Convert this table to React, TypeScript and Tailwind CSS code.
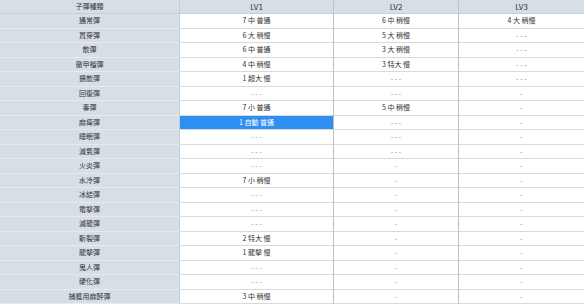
import React from "react";

type Row = { name: string; lv1: string; lv2: string; lv3: string; hot?: boolean };

const rows: Row[] = [
  { name: "通常彈", lv1: "7 中 普通", lv2: "6 中 稍慢", lv3: "4 大 稍慢" },
  { name: "貫穿彈", lv1: "6 大 稍慢", lv2: "5 大 稍慢", lv3: "- - -" },
  { name: "散彈", lv1: "6 中 普通", lv2: "3 大 稍慢", lv3: "- - -" },
  { name: "徹甲榴彈", lv1: "4 中 稍慢", lv2: "3 特大 慢", lv3: "- - -" },
  { name: "擴散彈", lv1: "1 超大 慢", lv2: "- - -", lv3: "- - -" },
  { name: "回復彈", lv1: "- - -", lv2: "- - -", lv3: "-" },
  { name: "毒彈", lv1: "7 小 普通", lv2: "5 中 稍慢", lv3: "-" },
  { name: "麻痺彈", lv1: "1 自動 普通", lv2: "- - -", lv3: "-", hot: true },
  { name: "睡眠彈", lv1: "- - -", lv2: "- - -", lv3: "-" },
  { name: "減氣彈", lv1: "- - -", lv2: "- - -", lv3: "-" },
  { name: "火炎彈", lv1: "- - -", lv2: "-", lv3: "-" },
  { name: "水冷彈", lv1: "7 小 稍慢", lv2: "-", lv3: "-" },
  { name: "冰結彈", lv1: "- - -", lv2: "-", lv3: "-" },
  { name: "電擊彈", lv1: "- - -", lv2: "-", lv3: "-" },
  { name: "滅龍彈", lv1: "- - -", lv2: "-", lv3: "-" },
  { name: "斬裂彈", lv1: "2 特大 慢", lv2: "-", lv3: "-" },
  { name: "龍擊彈", lv1: "1 龍擊 慢", lv2: "-", lv3: "-" },
  { name: "鬼人彈", lv1: "- - -", lv2: "-", lv3: "-" },
  { name: "硬化彈", lv1: "- - -", lv2: "-", lv3: "-" },
  { name: "捕獲用麻醉彈", lv1: "3 中 稍慢", lv2: "-", lv3: "-" },
];

const cell = (v: string) => (v.startsWith("-") ? "text-[#888]" : "text-[#333]");

export default function App() {
  return (
    <div
      className="w-[584px] h-[305px] overflow-hidden bg-white text-[7px] leading-none"
      style={{ fontFamily: '"Noto Sans CJK TC", "Noto Sans", sans-serif' }}
    >
      <div className="grid grid-cols-[180px_154px_125px_125px] grid-rows-[14px_repeat(20,14.5px)]">
        <div className="flex items-center justify-center bg-[#d7dfe6] border-r border-[#c3ccd3] border-b border-b-[#c8d0d6] text-[#333]">
          子彈種類
        </div>
        <div className="flex items-center justify-center bg-[#d7dfe6] border-r border-[#bcc4cb] border-b border-b-[#c8d0d6] text-[#333] text-[8px]">
          LV1
        </div>
        <div className="flex items-center justify-center bg-[#d7dfe6] border-r border-[#bcc4cb] border-b border-b-[#c8d0d6] text-[#333] text-[8px]">
          LV2
        </div>
        <div className="flex items-center justify-center bg-[#d7dfe6] border-b border-[#c8d0d6] text-[#333] text-[8px]">
          LV3
        </div>
        {rows.map((r) => (
          <React.Fragment key={r.name}>
            <div className="flex items-center justify-center bg-[#d7dfe6] border-r border-[#c3ccd3] border-b border-b-[#e6eaee] text-[#333]">
              {r.name}
            </div>
            <div
              className={
                r.hot
                  ? "flex items-center justify-center bg-[#2f8ef2] text-white border-r border-[#bdbdbd] border-b border-b-[#d9d9d9]"
                  : "flex items-center justify-center border-r border-[#bdbdbd] border-b border-b-[#d9d9d9] " + cell(r.lv1)
              }
            >
              {r.lv1}
            </div>
            <div className={"flex items-center justify-center border-r border-[#bdbdbd] border-b border-b-[#d9d9d9] " + cell(r.lv2)}>
              {r.lv2}
            </div>
            <div className={"flex items-center justify-center border-b border-[#d9d9d9] " + cell(r.lv3)}>
              {r.lv3}
            </div>
          </React.Fragment>
        ))}
      </div>
    </div>
  );
}
